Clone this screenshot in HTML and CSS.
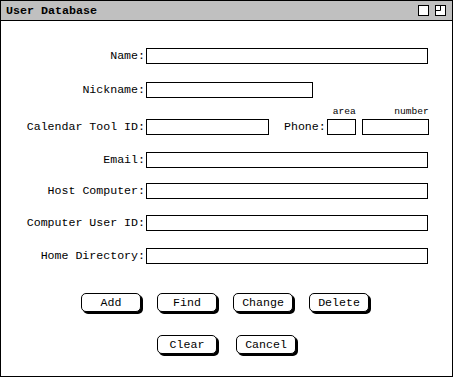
FILE: index.html
```html
<!DOCTYPE html>
<html>
<head>
<meta charset="utf-8">
<link rel="stylesheet" href="styles.css">
</head>
<body>
<div class="window">
  <div class="titlebar">
    <span class="title">User Database</span>
    <span class="tbtns">
      <svg class="tbtn" width="11" height="11" viewBox="0 0 11 11"><rect x="0.5" y="0.5" width="10" height="10" fill="#fff" stroke="#000"/></svg>
      <svg class="tbtn" width="11" height="11" viewBox="0 0 11 11"><rect x="0.5" y="0.5" width="10" height="10" fill="#fff" stroke="#000"/><path d="M5.5 0.5 V5.5 H0.5" fill="none" stroke="#000"/></svg>
    </span>
  </div>
  <div class="form">
    <div class="row r-name"><label class="lbl">Name:</label><div class="field w-full"></div></div>
    <div class="row r-nick"><label class="lbl">Nickname:</label><div class="field w-nick"></div></div>
    <div class="row r-cal">
      <label class="lbl">Calendar Tool ID:</label><div class="field w-cal"></div>
      <label class="lbl-phone">Phone:</label>
      <div class="cap-field"><span class="cap">area</span><div class="field w-area"></div></div>
      <div class="cap-field"><span class="cap">number</span><div class="field w-num"></div></div>
    </div>
    <div class="row r-email"><label class="lbl">Email:</label><div class="field w-full"></div></div>
    <div class="row r-host"><label class="lbl">Host Computer:</label><div class="field w-full"></div></div>
    <div class="row r-cuid"><label class="lbl">Computer User ID:</label><div class="field w-full"></div></div>
    <div class="row r-home"><label class="lbl">Home Directory:</label><div class="field w-full"></div></div>
  </div>
  <div class="buttons b1">
    <button class="btn">Add</button>
    <button class="btn">Find</button>
    <button class="btn">Change</button>
    <button class="btn">Delete</button>
  </div>
  <div class="buttons b2">
    <button class="btn">Clear</button>
    <button class="btn">Cancel</button>
  </div>
</div>
</body>
</html>
```
FILE: styles.css
```css
html, body { margin: 0; padding: 0; background: #fff; }
body {
  font-family: "Liberation Mono", "DejaVu Sans Mono", monospace;
  font-size: 11.6px;
  color: #000;
}
.window {
  width: 453px;
  height: 377px;
  box-sizing: border-box;
  border: 1px solid #000;
  background: #fff;
  display: flex;
  flex-direction: column;
}
.titlebar {
  height: 19px;
  background: #c0c0c0;
  border-bottom: 1px solid #000;
  display: flex;
  align-items: center;
  justify-content: space-between;
  padding: 0 6px 0 5px;
}
.title {
  font-weight: bold;
  font-size: 11.67px;
}
.tbtns { display: flex; gap: 6px; align-items: center; }
.tbtn { display: block; }
.form {
  display: flex;
  flex-direction: column;
  padding-top: 27px;
}
.row {
  display: flex;
  align-items: flex-end;
  height: 16px;
}
.r-nick { margin-top: 18px; }
.r-cal { margin-top: 21px; }
.r-email { margin-top: 17px; }
.r-host { margin-top: 15px; }
.r-cuid { margin-top: 16px; }
.r-home { margin-top: 17px; }
.lbl {
  width: 144px;
  text-align: right;
  line-height: 16px;
  flex: none;
  margin-right: 1px;
}
.field {
  height: 16px;
  box-sizing: border-box;
  border: 1px solid #000;
  background: #fff;
  flex: none;
}
.w-full { width: 282px; }
.w-nick { width: 167px; }
.w-cal { width: 123px; }
.w-area { width: 29px; }
.w-num { width: 67px; }
.lbl-phone {
  margin-left: 15px;
  margin-right: 1px;
  line-height: 16px;
}
.cap-field {
  display: flex;
  flex-direction: column;
  align-items: flex-end;
  margin-right: 6px;
}
.cap {
  font-size: 9.6px;
  line-height: 8px;
  height: 8px;
  margin-top: -11px;
  margin-bottom: 3px;
}
.buttons {
  display: flex;
  justify-content: center;
}
.b1 { gap: 16px; margin-top: 29px; padding-right: 3px; }
.b2 { gap: 19px; margin-top: 23px; }
.btn {
  width: 60px;
  height: 19px;
  box-sizing: border-box;
  border: 1px solid #000;
  border-radius: 5px;
  background: #fff;
  box-shadow: 2px 2px 0 #000;
  font-family: "Liberation Mono", "DejaVu Sans Mono", monospace;
  font-size: 11.6px;
  color: #000;
  padding: 0;
  line-height: 17px;
}
```
